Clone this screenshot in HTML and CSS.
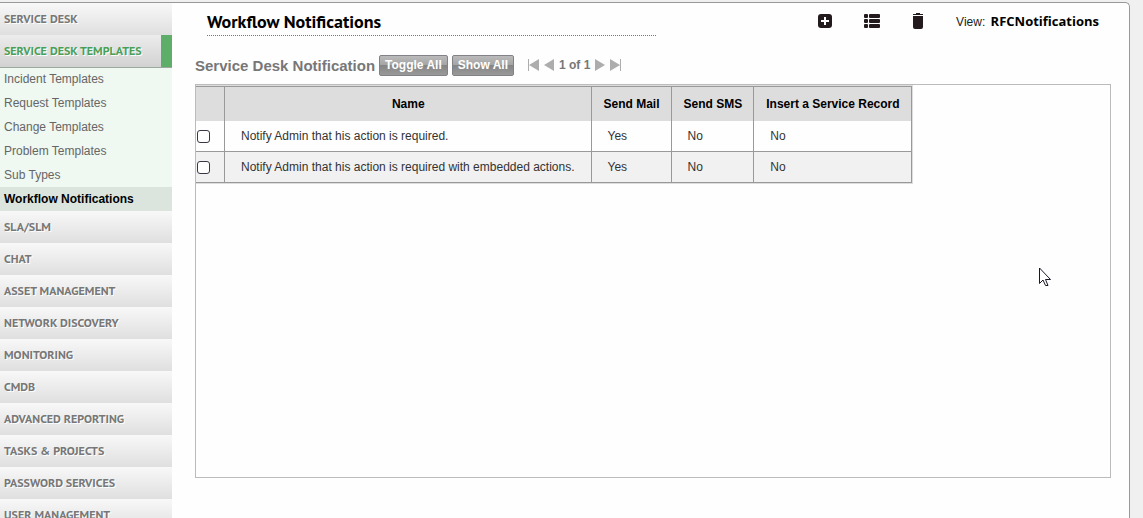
FILE: index.html
```html
<!DOCTYPE html>
<html lang="en">
<head>
    <meta charset="utf-8">
    <title>Workflow Notifications</title>
    <link rel="stylesheet" href="styles.css">
</head>
<body>
    <div class="panel">
        <nav class="sidebar">
            <a class="menu-item" href="#">SERVICE DESK</a>
            <a class="menu-item active" href="#">SERVICE DESK TEMPLATES</a>
            <div class="submenu">
                <a href="#">Incident Templates</a>
                <a href="#">Request Templates</a>
                <a href="#">Change Templates</a>
                <a href="#">Problem Templates</a>
                <a href="#">Sub Types</a>
                <a class="current" href="#">Workflow Notifications</a>
            </div>
            <a class="menu-item" href="#">SLA/SLM</a>
            <a class="menu-item" href="#">CHAT</a>
            <a class="menu-item" href="#">ASSET MANAGEMENT</a>
            <a class="menu-item" href="#">NETWORK DISCOVERY</a>
            <a class="menu-item" href="#">MONITORING</a>
            <a class="menu-item" href="#">CMDB</a>
            <a class="menu-item" href="#">ADVANCED REPORTING</a>
            <a class="menu-item" href="#">TASKS &amp; PROJECTS</a>
            <a class="menu-item" href="#">PASSWORD SERVICES</a>
            <a class="menu-item" href="#">USER MANAGEMENT</a>
        </nav>

        <main class="content">
            <header class="page-header">
                <h1>Workflow Notifications</h1>
                <div class="actions">
                    <button class="icon-button" aria-label="New">
                        <svg width="14" height="14" viewBox="0 0 14 14">
                            <rect width="14" height="14" rx="3" fill="#231a1e"/>
                            <path d="M7 3v8M3 7h8" stroke="#fff" stroke-width="2"/>
                        </svg>
                    </button>
                    <button class="icon-button" aria-label="Customize list">
                        <svg width="16" height="14" viewBox="0 0 16 14" fill="#231a1e">
                            <rect x="0" y="0" width="4" height="4" rx="1"/>
                            <rect x="5" y="0" width="11" height="4" rx="1"/>
                            <rect x="0" y="5" width="4" height="4" rx="1"/>
                            <rect x="5" y="5" width="11" height="4" rx="1"/>
                            <rect x="0" y="10" width="4" height="4" rx="1"/>
                            <rect x="5" y="10" width="11" height="4" rx="1"/>
                        </svg>
                    </button>
                    <button class="icon-button" aria-label="Delete">
                        <svg width="12" height="16" viewBox="0 0 12 16" fill="#231a1e">
                            <path d="M4 0h4v1h3v1H1V1h3z"/>
                            <path d="M1 3h10v11q0 2-2 2H3q-2 0-2-2z"/>
                        </svg>
                    </button>
                    <a class="view" href="#">View: <strong>RFCNotifications</strong></a>
                </div>
            </header>

            <div class="toolbar">
                <h2>Service Desk Notification</h2>
                <button class="button">Toggle All</button>
                <button class="button">Show All</button>
                <div class="pager">
                    <button class="page-button" aria-label="First page">
                        <svg width="11" height="12" viewBox="0 0 11 12"><path d="M0 0h1v12H0zM11 0v12L1 6z"/></svg>
                    </button>
                    <button class="page-button" aria-label="Previous page">
                        <svg width="10" height="12" viewBox="0 0 10 12"><path d="M10 0v12L0 6z"/></svg>
                    </button>
                    <span>1 of 1</span>
                    <button class="page-button" aria-label="Next page">
                        <svg width="10" height="12" viewBox="0 0 10 12"><path d="M0 0v12l10-6z"/></svg>
                    </button>
                    <button class="page-button" aria-label="Last page">
                        <svg width="11" height="12" viewBox="0 0 11 12"><path d="M10 0h1v12h-1zM0 0v12l10-6z"/></svg>
                    </button>
                </div>
            </div>

            <div class="list">
                <table>
                    <thead>
                        <tr>
                            <th class="check"></th>
                            <th>Name</th>
                            <th>Send Mail</th>
                            <th>Send SMS</th>
                            <th>Insert a Service Record</th>
                        </tr>
                    </thead>
                    <tbody>
                        <tr>
                            <td class="check"><input type="checkbox" id="row1" aria-labelledby="name1"></td>
                            <td><label id="name1" for="row1">Notify Admin that his action is required.</label></td>
                            <td>Yes</td>
                            <td>No</td>
                            <td>No</td>
                        </tr>
                        <tr>
                            <td class="check"><input type="checkbox" id="row2" aria-labelledby="name2"></td>
                            <td><label id="name2" for="row2">Notify Admin that his action is required with embedded actions.</label></td>
                            <td>Yes</td>
                            <td>No</td>
                            <td>No</td>
                        </tr>
                    </tbody>
                </table>
            </div>
        </main>
    </div>

    <svg class="cursor" width="13" height="20" viewBox="0 0 13 20">
        <path d="M.5 1v15.500l3.500-3.500 2.500 5.500h2.500l-2.500-6h5z" fill="#fff" stroke="#1b1726"/>
    </svg>
</body>
</html>
```

FILE: styles.css
```css
* {
    box-sizing: border-box;
}

body {
    margin: 0;
    padding: 2px 13px 0 0;
    height: 100vh;
    overflow: hidden;
    background: #f0f0f0;
    font-family: "Liberation Sans", Arial, sans-serif;
    font-size: 12px;
    color: #333;
}

a {
    color: inherit;
    text-decoration: none;
}

button {
    font-family: inherit;
    cursor: pointer;
}

.panel {
    display: flex;
    height: 100%;
    background: #fefefe;
    border: 1px solid #999;
    border-width: 1px 1px 0 0;
    border-top-right-radius: 5px;
}

/* left menu */
.sidebar {
    flex: none;
    width: 172px;
    overflow: hidden;
}

.menu-item {
    display: block;
    height: 32px;
    padding-left: 4px;
    line-height: 31px;
    font-family: "PT Sans", "Lato", sans-serif;
    font-size: 12px;
    font-weight: bold;
    color: #777;
    text-shadow: 1px 1px 0 #fff;
    white-space: nowrap;
    background: linear-gradient(#f8f8f8, #dfdfdf);
}

.menu-item.active {
    color: #4a9f58;
    background: linear-gradient(#ececec, #d2d2d2);
    border-right: 11px solid #5dae68;
}

.submenu {
    background: #eff8f1;
    border-top: 1px solid #9ca89e;
}

.submenu a {
    display: block;
    height: 24px;
    padding-left: 4px;
    line-height: 24px;
    color: #666;
}

.submenu a:first-child {
    height: 23px;
    line-height: 22px;
}

.submenu a.current {
    font-weight: bold;
    color: #000;
    background: #dbe5dd;
}

/* main area */
.content {
    flex: 1;
    display: flex;
    flex-direction: column;
    min-width: 0;
    padding: 0 18px 40px 23px;
}

.page-header {
    display: flex;
    justify-content: space-between;
    padding: 0 12px;
}

h1 {
    flex: 0 1 449px;
    height: 33px;
    margin: 0;
    line-height: 38px;
    font-family: "PT Sans", "Lato", sans-serif;
    font-size: 18px;
    font-weight: bold;
    color: #000;
    border-bottom: 1px dotted #777;
}

.actions {
    display: flex;
    align-items: center;
    height: 35px;
}

.icon-button,
.page-button {
    display: flex;
    padding: 0;
    background: none;
    border: none;
}

.icon-button {
    margin-right: 32px;
}

.view {
    color: #222;
}

.view strong {
    margin-left: 2px;
    font-family: "Open Sans", sans-serif;
    font-size: 13px;
    color: #000;
}

.toolbar {
    display: flex;
    align-items: center;
    gap: 4px;
    height: 22px;
    margin: 16px 0 8px;
    color: #777;
}

h2 {
    margin: 0;
    font-size: 15px;
    font-weight: bold;
}

.button {
    height: 21px;
    padding: 0 5px;
    font-size: 12px;
    font-weight: bold;
    color: #fff;
    background: linear-gradient(#bbb, #a5a5a5 45%, #858585 50%, #999);
    border: 1px solid #808285;
    border-radius: 2px;
}

.pager {
    display: flex;
    align-items: center;
    gap: 5px;
    margin-left: 10px;
    font-size: 12px;
    font-weight: bold;
}

.page-button {
    fill: #adadad;
}

/* notification list */
.list {
    flex: 1;
    border: 1px solid #bbb;
}

table {
    border-spacing: 0;
    border: 1px solid #ddd;
    border-left: none;
}

th,
td {
    border-right: 1px solid #999;
    white-space: nowrap;
}

th {
    height: 35px;
    padding: 0 11px 0 12px;
    color: #000;
    background: #ddd;
    border-top: 1px solid #999;
}

td {
    height: 31px;
    padding: 0 16px;
    border-bottom: 1px solid #999;
}

tbody tr:nth-child(even) {
    background: #f1f1f1;
}

.check {
    width: 29px;
    padding: 0;
}

.check input {
    display: block;
    width: 13px;
    height: 13px;
    margin: 0 0 0 1px;
    appearance: none;
    background: #fff;
    border: 1px solid #3b3645;
    border-radius: 3px;
}

.check input:checked {
    background: #3b3645;
}

.cursor {
    position: absolute;
    left: 1039px;
    top: 267px;
}
```
